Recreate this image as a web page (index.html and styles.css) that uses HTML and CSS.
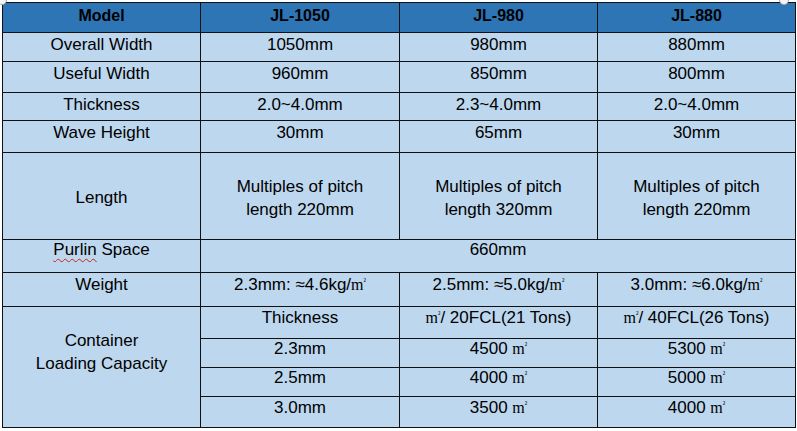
FILE: index.html
```html
<!DOCTYPE html>
<html>
<head>
<meta charset="utf-8">
<link rel="stylesheet" href="styles.css">
</head>
<body>
<span class="handle hl"></span><span class="handle hr"></span>
<table class="spec">
  <colgroup>
    <col class="c1"><col class="c2"><col class="c3"><col class="c4">
  </colgroup>
  <tr class="head h30">
    <th>Model</th><th>JL-1050</th><th>JL-980</th><th>JL-880</th>
  </tr>
  <tr class="h29 low"><td>Overall Width</td><td>1050mm</td><td>980mm</td><td>880mm</td></tr>
  <tr class="h31"><td>Useful Width</td><td>960mm</td><td>850mm</td><td>800mm</td></tr>
  <tr class="h28 low"><td>Thickness</td><td>2.0~4.0mm</td><td>2.3~4.0mm</td><td>2.0~4.0mm</td></tr>
  <tr class="h32"><td>Wave Height</td><td>30mm</td><td>65mm</td><td>30mm</td></tr>
  <tr class="h87 two"><td>Length</td><td>Multiples of pitch<br>length 220mm</td><td>Multiples of pitch<br>length 320mm</td><td>Multiples of pitch<br>length 220mm</td></tr>
  <tr class="h33 up"><td><span class="spell">Purlin</span> Space</td><td colspan="3">660mm</td></tr>
  <tr class="h34 up wt"><td>Weight</td><td>2.3mm: ≈4.6kg/<span class="sq">m<span class="sup">²</span></span></td><td>2.5mm: ≈5.0kg/<span class="sq">m<span class="sup">²</span></span></td><td>3.0mm: ≈6.0kg/<span class="sq">m<span class="sup">²</span></span></td></tr>
  <tr class="h32 sub"><td rowspan="4" class="cont">Container<br>Loading Capacity</td><td>Thickness</td><td><span class="sq">m<span class="sup">²</span></span>/ 20FCL(21 Tons)</td><td><span class="sq">m<span class="sup">²</span></span>/ 40FCL(26 Tons)</td></tr>
  <tr class="h29 sub"><td>2.3mm</td><td>4500 <span class="sq">m<span class="sup">²</span></span></td><td>5300 <span class="sq">m<span class="sup">²</span></span></td></tr>
  <tr class="h29 sub"><td>2.5mm</td><td>4000 <span class="sq">m<span class="sup">²</span></span></td><td>5000 <span class="sq">m<span class="sup">²</span></span></td></tr>
  <tr class="h31 sub"><td>3.0mm</td><td>3500 <span class="sq">m<span class="sup">²</span></span></td><td>4000 <span class="sq">m<span class="sup">²</span></span></td></tr>
</table>
</body>
</html>
```

FILE: styles.css
```css
html, body {
  margin: 0;
  padding: 0;
  background: #ffffff;
}
body {
  position: relative;
  padding: 2px 0 0 2px;
  font-family: "Liberation Sans", Arial, sans-serif;
  font-size: 17px;
  color: #000;
}
.handle {
  position: absolute;
  top: -5px;
  width: 8px;
  height: 8px;
  border: 1px solid #a8a8a8;
  border-radius: 50%;
  background: #f4f4f4;
  z-index: 2;
}
.hl { left: -3px; }
.hr { left: 779px; }
.spec {
  border-collapse: collapse;
  table-layout: fixed;
  width: 793px;
  background: #bdd7ee;
}
.c1 { width: 198px; }
.c2 { width: 199px; }
.c3 { width: 198px; }
.c4 { width: 198px; }
.spec th, .spec td {
  border: 1px solid #111;
  padding: 0 0 7px 0;
  text-align: center;
  vertical-align: middle;
  line-height: 18px;
  font-weight: normal;
}
.head th {
  background: #2e75b6;
  font-weight: bold;
  font-size: 16px;
  padding-bottom: 3px;
}
.h28 { height: 28px; }
.h29 { height: 29px; }
.h30 { height: 30px; }
.h31 { height: 31px; }
.h32 { height: 32px; }
.h33 { height: 33px; }
.h34 { height: 34px; }
.h87 { height: 87px; }
.spec .low td { padding-bottom: 4px; }
.spec .two td { padding: 3px 0 0 0; line-height: 23px; }
.spec .up td { padding-bottom: 13px; }
.spec .wt td { padding-bottom: 9px; }
.spec .sub td { padding-bottom: 9px; }
.spec td.cont { padding-bottom: 30px; line-height: 23px; }
.spell {
  text-decoration: underline wavy #d02020;
  text-decoration-thickness: 1px;
  text-underline-offset: 3px;
}
.sq {
  font-family: "Liberation Serif", serif;
  font-size: 16px;
}
.sup {
  font-size: 8px;
  vertical-align: 6px;
  line-height: 0;
}
```
